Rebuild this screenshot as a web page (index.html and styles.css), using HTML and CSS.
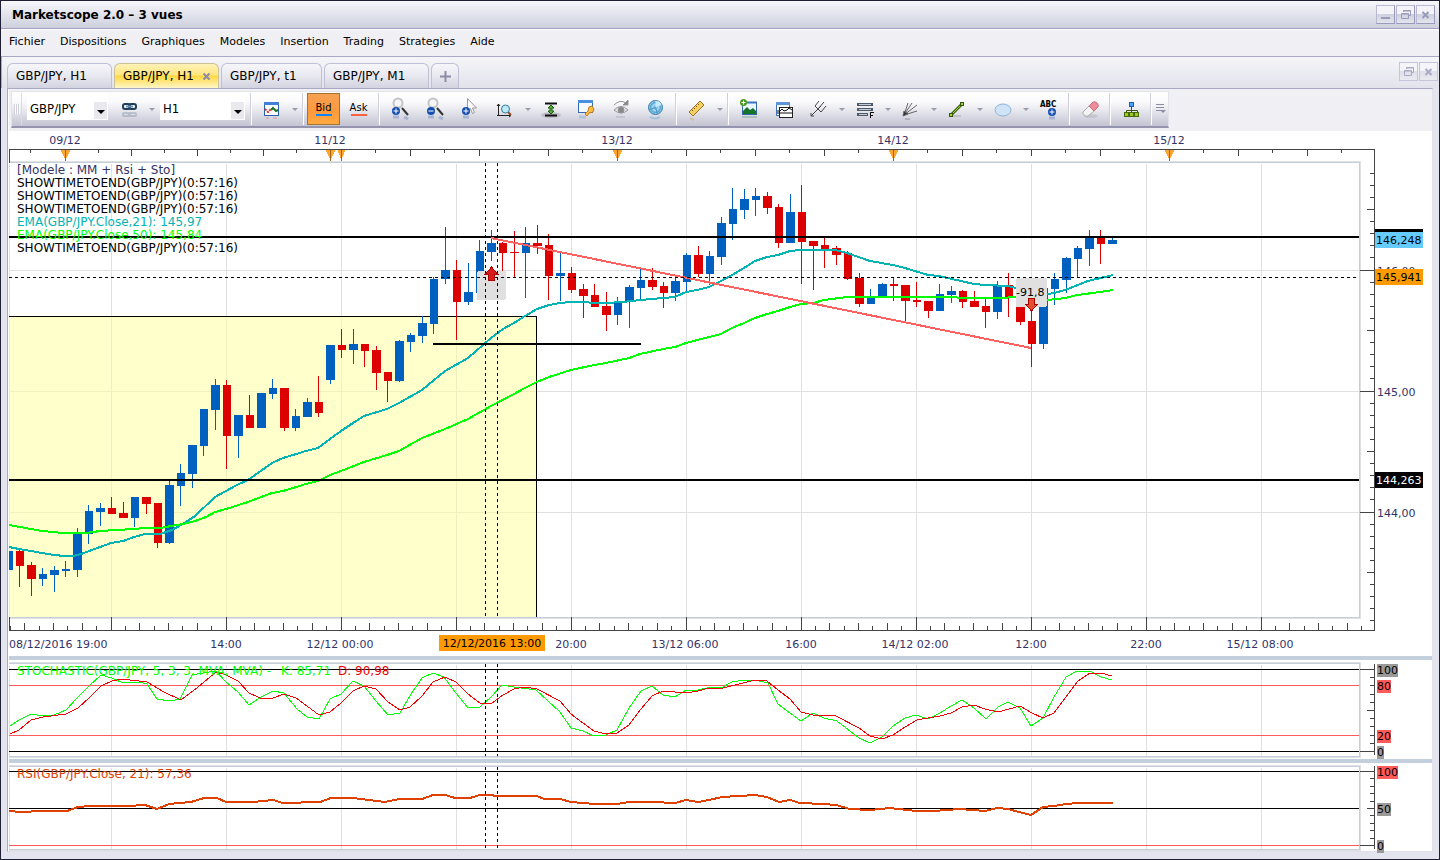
FILE: index.html
```html
<!DOCTYPE html>
<html lang="fr">
<head>
<meta charset="UTF-8">
<meta name="viewport" content="width=device-width, initial-scale=1.0">
<title>Marketscope 2.0</title>
<link rel="stylesheet" href="styles.css">
</head>
<body>

<div class="window">
    <header class="titlebar">
        <h1>Marketscope 2.0 – 3 vues</h1>
        <div class="window-buttons">
            <button type="button" aria-label="Minimize"><svg width="17" height="17"><path d="M4 12h9" stroke="#9a9abb" stroke-width="2"/></svg></button>
            <button type="button" aria-label="Restore"><svg width="17" height="17" fill="none" stroke="#9a9abb"><path d="M6.5 6V4.5h7v5H12M6 5h8M4.5 7.5h7v5h-7zM4 8h8"/></svg></button>
            <button type="button" aria-label="Close"><svg width="17" height="17"><path d="M5.5 6l6 6M11.5 6l-6 6" stroke="#9a9abb" stroke-width="2"/></svg></button>
        </div>
    </header>

    <nav class="menu">
        <a href="#">Fichier</a>
        <a href="#">Dispositions</a>
        <a href="#">Graphiques</a>
        <a href="#">Modeles</a>
        <a href="#">Insertion</a>
        <a href="#">Trading</a>
        <a href="#">Strategies</a>
        <a href="#">Aide</a>
    </nav>

    <div class="tabs">
        <button type="button" class="tab">GBP/JPY, H1</button>
        <button type="button" class="tab active">GBP/JPY, H1 <svg width="9" height="9"><path d="M1.5 1.5l6 6M7.5 1.5l-6 6" stroke="#8c8ca8" stroke-width="2"/></svg></button>
        <button type="button" class="tab tab-short">GBP/JPY, t1</button>
        <button type="button" class="tab">GBP/JPY, M1</button>
        <button type="button" class="tab tab-add" aria-label="New tab"><svg width="11" height="11"><path d="M5.5 0v11M0 5.5h11" stroke="#8c8ca8" stroke-width="2"/></svg></button>
        <div class="window-buttons inner">
            <button type="button" aria-label="Restore chart"><svg width="17" height="17" fill="none" stroke="#a9a9c6"><path d="M6.5 6V4.5h7v5H12M6 5h8M4.5 7.5h7v5h-7zM4 8h8"/></svg></button>
            <button type="button" aria-label="Close chart"><svg width="17" height="17"><path d="M5.5 6l6 6M11.5 6l-6 6" stroke="#a9a9c6" stroke-width="2"/></svg></button>
        </div>
    </div>

    <main class="view">
        <div class="toolbar-row">
        <div class="toolbar">
            <span class="grip"></span>
            <select class="combo" aria-label="Instrument"><option>GBP/JPY</option></select>
            <button type="button" class="tool" aria-label="Link"><svg width="24" height="24" fill="none" stroke="#1f3f5c" stroke-width="2"><rect x="6" y="7" width="7" height="5" rx="2"/><rect x="12" y="7" width="7" height="5" rx="2"/><path d="M9 9.5h7" stroke="#6f93b3"/><g opacity=".2"><rect x="6" y="16" width="7" height="3" rx="1"/><rect x="12" y="16" width="7" height="3" rx="1"/></g></svg></button>
            <button type="button" class="caret" aria-label="Link options"></button>
            <select class="combo combo-period" aria-label="Period"><option>H1</option></select>
            <span class="sep"></span>
            <button type="button" class="tool" aria-label="Chart type"><svg width="24" height="24" fill="none"><rect x="4.5" y="5.5" width="14" height="13" fill="#fff" stroke="#2b5fae"/><path d="M4 6.5h15" stroke="#3f7fd8" stroke-width="3"/><path d="M5 12l3 3 3-3" stroke="#e03020" stroke-width="2" stroke-dasharray="2 1"/><path d="M11 13l2-2 3 3 2-1" stroke="#20702a" stroke-width="2"/><path d="M6 21h3M13 21h4" stroke="#c99" opacity=".5" stroke-width="2"/></svg></button>
            <button type="button" class="caret" aria-label="Chart type options"></button>
            <span class="sep"></span>
            <button type="button" class="price bid">Bid</button>
            <button type="button" class="price ask">Ask</button>
            <span class="sep"></span>
            <button type="button" class="tool" aria-label="Zoom in"><svg width="24" height="24" fill="none"><path d="M14 11l6 7" stroke="#333" stroke-width="2"/><circle cx="10" cy="6" r="4.5" fill="#f6f6f6" stroke="#c4c4c4" stroke-width="2"/><circle cx="8" cy="14" r="4" fill="#1550b0"/><path d="M8 11.5v5M5.5 14h5" stroke="#fff"/><path d="M5 20h6M16 20l4 2" stroke="#6080b8" opacity=".4" stroke-width="3"/></svg></button>
            <button type="button" class="tool" aria-label="Zoom out"><svg width="24" height="24" fill="none"><path d="M14 11l6 7" stroke="#333" stroke-width="2"/><circle cx="10" cy="6" r="4.5" fill="#f6f6f6" stroke="#c4c4c4" stroke-width="2"/><circle cx="8" cy="14" r="4" fill="#1550b0"/><path d="M5.5 14h5" stroke="#fff"/><path d="M5 20h6M16 20l4 2" stroke="#6080b8" opacity=".4" stroke-width="3"/></svg></button>
            <button type="button" class="tool" aria-label="Pointer"><svg width="24" height="24" fill="none"><path d="M9.5 1.5v12l3-2 2 5 2-1-2-4.5h4z" fill="#fafafa" stroke="#999"/><circle cx="8" cy="14" r="4" fill="#1550b0"/><path d="M8 11.5v5M5.5 14h5" stroke="#fff"/><path d="M5 20h6" stroke="#6080b8" opacity=".4" stroke-width="3"/></svg></button>
            <button type="button" class="tool" aria-label="Scale zoom"><svg width="24" height="24" fill="none"><path d="M5.5 7v12M4 9l1.5-2L7 9M4 18.5h13M16 17l2 1.5-2 1.5" stroke="#222"/><path d="M15 15l3 3" stroke="#a05020" stroke-width="2"/><circle cx="12.5" cy="12" r="4" fill="#bdeaf8" stroke="#367a94"/></svg></button>
            <button type="button" class="caret" aria-label="Scale options"></button>
            <button type="button" class="tool" aria-label="Fit height"><svg width="24" height="24" fill="none"><ellipse cx="12" cy="18" rx="10" ry="3" fill="#777" opacity=".3"/><path d="M6 6.5h12M6 18.5h12" stroke="#111" stroke-width="2"/><path d="M12 8l3 3h-2v3h2l-3 3-3-3h2v-3H9z" fill="#58b030" stroke="#1f5c14"/></svg></button>
            <button type="button" class="tool" aria-label="Properties"><svg width="24" height="24" fill="none"><rect x="4.5" y="3.5" width="14" height="12" fill="#f4f8ff" stroke="#3868b0"/><path d="M4 4.5h15" stroke="#4a8ee0" stroke-width="3"/><path d="M11 17l3-3 1-4 3-1 2 3-1 3-4 1-2 3z" fill="#ffc04a" stroke="#c47a12"/><path d="M5 20h7" stroke="#7ba0dc" opacity=".4" stroke-width="3"/></svg></button>
            <button type="button" class="tool" aria-label="Refresh view"><svg width="24" height="24" fill="none" stroke="#94949a"><path d="M5 13q7-7 14 0q-7 6-14 0z" fill="#e8e8ec"/><circle cx="12" cy="13" r="3" fill="#888"/><path d="M5 8q6-6 12-2"/><path d="M19 3v5h-5z" fill="#888"/><path d="M7 20h9" opacity=".3" stroke-width="2"/></svg></button>
            <button type="button" class="tool" aria-label="Web"><svg width="24" height="24" fill="none"><circle cx="11.5" cy="10.5" r="7" fill="#7ec0e6" stroke="#3a80ac"/><circle cx="11.5" cy="10.5" r="5" stroke="#5aa4cc"/><circle cx="11.5" cy="10.5" r="3" stroke="#b8e2f6"/><path d="M11.5 10.5V4q5 0 6 4z" fill="#c7ecff"/><path d="M11.5 10.5l-6 2M11.5 10.5l2 6" stroke="#4a94c0"/><path d="M6 20q5 3 10 0" stroke="#70a8d0" opacity=".5" stroke-width="2"/></svg></button>
            <span class="sep"></span>
            <button type="button" class="tool" aria-label="Ruler"><svg width="24" height="24" fill="none"><path d="M4 15L15 4l4 4L8 19z" fill="#f6cf63" stroke="#9a7420"/><path d="M7 13l1 1M9 11l1 1M11 9l1 1M13 7l1 1" stroke="#7a5a10"/><path d="M5 21l4 2" stroke="#c5a55c" opacity=".4" stroke-width="2"/></svg></button>
            <button type="button" class="caret" aria-label="Ruler options"></button>
            <span class="sep"></span>
            <button type="button" class="tool" aria-label="Add picture"><svg width="24" height="24" fill="none"><rect x="5.5" y="5.5" width="14" height="12" fill="#e9f5ff" stroke="#3566a8"/><path d="M5 5.5h15" stroke="#3a72c4" stroke-width="2"/><path d="M6 17v-3l4-4 3 3 3-2 3 3v3z" fill="#14742a"/><circle cx="6.5" cy="5.5" r="3.5" fill="#4a9a20"/><path d="M6.5 3.5v4M4.5 5.5h4" stroke="#fff"/><path d="M5 20h15" stroke="#5a9080" opacity=".35" stroke-width="2"/></svg></button>
            <button type="button" class="tool" aria-label="Indicator"><svg width="24" height="24" fill="none"><rect x="4.5" y="5.5" width="13" height="13" fill="#f4f8ff" stroke="#4272b8"/><path d="M4 6.5h14" stroke="#5d94dc" stroke-width="3"/><rect x="7.5" y="10.5" width="13" height="10" fill="#fff" stroke="#222"/><path d="M5 14h3l2-2 2 2 3-1 2-2 3 2M5 16h15" stroke="#111"/></svg></button>
            <button type="button" class="tool" aria-label="Pitchfork"><svg width="24" height="24" stroke="#444" fill="none"><path d="M4 19l10-10M8 9l6 6M8 9l4-5M11 12l6-7M14 15l5-6M4 16v3h3"/></svg></button>
            <button type="button" class="caret" aria-label="Pitchfork options"></button>
            <button type="button" class="tool" aria-label="Fibonacci"><svg width="24" height="24" stroke="#4b5a66" fill="none"><path d="M4 7.5h16M4 12.5h16M4 17.5h11" stroke-width="3"/><path d="M6 7.5h12M6 12.5h12M6 17.5h8" stroke="#c2ccd6"/><path d="M17.5 21v-6M17 15.5h4M17 18.5h3" stroke="#111"/></svg></button>
            <button type="button" class="caret" aria-label="Fibonacci options"></button>
            <button type="button" class="tool" aria-label="Fan"><svg width="24" height="24" stroke="#666" fill="none"><path d="M5 18L9 6M5 18l8-12M5 18L18 8M5 18l13-4"/><path d="M4 19l1-5 4 3z" fill="#333"/><path d="M6 22h5" opacity=".3" stroke-width="2"/></svg></button>
            <button type="button" class="caret" aria-label="Fan options"></button>
            <button type="button" class="tool" aria-label="Line"><svg width="24" height="24" fill="none"><path d="M7 19h9" stroke="#888" opacity=".3" stroke-width="2"/><path d="M6 18L17 7" stroke="#3f6810" stroke-width="3"/><path d="M6 18L17 7" stroke="#9ad02c"/><rect x="4.5" y="16.5" width="3" height="3" fill="#a5d43c" stroke="#33560b"/><rect x="15.5" y="5.5" width="3" height="3" fill="#a5d43c" stroke="#33560b"/></svg></button>
            <button type="button" class="caret" aria-label="Line options"></button>
            <button type="button" class="tool" aria-label="Ellipse"><svg width="24" height="24"><ellipse cx="12" cy="13" rx="8" ry="6" fill="#cfe3f6" stroke="#8fb4da"/></svg></button>
            <button type="button" class="caret" aria-label="Ellipse options"></button>
            <button type="button" class="tool" aria-label="Add label"><svg width="24" height="24" fill="none"><text x="3" y="10" class="abc">ABC</text><circle cx="15" cy="15" r="4" fill="#1550b0"/><path d="M15 12.5v5M12.5 15h5" stroke="#fff"/><path d="M12 21h6" stroke="#6080b8" opacity=".4" stroke-width="3"/></svg></button>
            <span class="sep"></span>
            <button type="button" class="tool" aria-label="Eraser"><svg width="24" height="24"><ellipse cx="13" cy="19" rx="7" ry="2" fill="#888" opacity=".25"/><path d="M5 15l6-6 5 5-6 5q-2 1-4-1t-1-3z" fill="#f4f4f4" stroke="#aaa"/><path d="M11 9l4-4q2-1 4 1t1 4l-4 4z" fill="#ee8c9c" stroke="#cc7080"/></svg></button>
            <span class="sep"></span>
            <button type="button" class="tool" aria-label="Hierarchy"><svg width="24" height="24" fill="none"><path d="M12.5 10v4M7.5 16v-2.5h11V16M12.5 14v2" stroke="#3b5a10"/><rect x="10.5" y="5.5" width="4" height="4" fill="#4ba4ff" stroke="#1560b4"/><g fill="#9acb1e" stroke="#48680c"><rect x="5.5" y="15.5" width="4" height="4"/><rect x="10.5" y="15.5" width="4" height="4"/><rect x="15.5" y="15.5" width="4" height="4"/></g></svg></button>
            <span class="sep"></span>
            <button type="button" class="more" aria-label="More tools"><svg width="10" height="12" fill="none"><path d="M0 1.5h8M0 4.5h8M0 7.5h5" stroke="#8c8ca4"/><path d="M4 7h6l-3 3z" fill="#8c8ca4"/></svg></button>
        </div>
        </div>

        <svg class="chart" viewBox="9 131 1423 525">
            <g id="priceGrid" class="grid"></g>
            <g class="crisp">
                <rect x="9" y="316" width="527" height="301" fill="#ffff99" opacity=".5"/>
                <path d="M9 316.5H536.5V617" class="black"/>
            </g>
            <g id="candles" class="crisp"></g>
            <polyline class="ema21" points="9,547 19,549 31,551 42,553 54,555 65,556 73,556 81,554 100,547 111,543 123,541 134,537 145,534 160,534 172,530 183,524 195,516 215,497 226,491 237,485 248,480 272,463 283,458 306,451 318,448 330,439 341,431 353,423 364,416 387,409 399,403 422,390 445,371 468,358 491,338 503,329 514,323 525,316 537,309 549,305 560,303 571,302 606,303 623,302 640,300 663,298 675,297 686,292 697,290 709,287 721,281 732,275 744,268 755,261 767,257 778,255 790,251 801,250 835,250 847,253 870,261 893,265 905,268 928,275 939,276 974,284 985,285 1008,286 1016,288 1031,293 1048,294 1054,293 1065,290 1088,281 1113,275"/>
            <polyline class="ema50" points="9,525 31,529 42,531 54,532 62,533 86,533 100,531 134,529 145,528 160,528 183,524 195,521 206,517 215,512 226,509 248,502 272,493 283,491 306,484 318,481 330,475 341,471 364,462 387,455 399,451 422,438 445,429 468,419 491,406 514,394 525,388 537,382 549,377 571,370 594,365 606,363 629,358 640,354 663,349 675,347 686,343 709,337 721,334 732,328 744,323 755,318 767,314 778,311 790,307 801,304 813,303 824,300 847,297 939,297 974,298 1000,298 1016,297 1030,299 1048,300 1065,298 1077,295 1100,292 1113,290"/>
            <g class="crisp">
                <path d="M9 237H1359M9 480H1359M433 344H641" class="black thick"/>
                <path d="M491 238L1031 348" stroke="#ff6060" stroke-width="2"/>
                <rect x="477" y="271" width="29" height="29" rx="2" fill="#e0e0e0"/>
                <rect x="1016" y="278" width="31" height="29" rx="2" fill="#e0e0e0"/>
                <path d="M9 277.5H1360M485.5 163V617M497.5 163V617" class="dashed"/>
            </g>
            <path d="M491.5 267l6 7h-3v6.5h-6V274h-3z" fill="#d81c1c" stroke="#a00"/>
            <path d="M1031.5 311l6-7h-3v-6h-6v6h-3z" fill="#e05030" stroke="#a00"/>
            <text x="1016" y="296" class="dark">-91,8</text>
            <path class="frame-outer" d="M9 161.5H1360.5V618.5H9"/>
            <path class="frame" d="M9 162.5H1359.5V617.5H9"/>
            <g id="dayAxis"></g>
            <g id="timeAxis"></g>
            <g id="priceAxis"></g>
            <path class="axis" d="M9.5 163V149.5H1374.5V630.5H9.5V617"/>
            <g class="legend">
                <text x="17" y="174">[Modele : MM + Rsi + Sto]</text>
                <text x="17" y="187" class="dark">SHOWTIMETOEND(GBP/JPY)(0:57:16)</text>
                <text x="17" y="200" class="dark">SHOWTIMETOEND(GBP/JPY)(0:57:16)</text>
                <text x="17" y="213" class="dark">SHOWTIMETOEND(GBP/JPY)(0:57:16)</text>
                <text x="17" y="226" fill="#00b4b4">EMA(GBP/JPY.Close,21): 145,97</text>
                <text x="17" y="239" fill="#00ff00">EMA(GBP/JPY.Close,50): 145,84</text>
                <text x="17" y="252" class="dark">SHOWTIMETOEND(GBP/JPY)(0:57:16)</text>
            </g>
            <text x="1377" y="275">146,00</text>
            <text x="1377" y="396">145,00</text>
            <text x="1377" y="517">144,00</text>
            <g class="crisp">
                <rect x="1375" y="229" width="48" height="4" fill="#000"/>
                <rect x="1375" y="232" width="48" height="16" fill="#66ccff"/>
                <rect x="1375" y="269" width="48" height="16" fill="#ff9900"/>
                <rect x="1375" y="472" width="48" height="16" fill="#000"/>
                <rect x="439" y="635" width="106" height="16" fill="#ff9900"/>
            </g>
            <text x="1376" y="244" class="dark">146,248</text>
            <text x="1376" y="281" class="dark">145,941</text>
            <text x="1376" y="484" fill="#fff">144,263</text>
            <text x="492" y="647" class="dark" text-anchor="middle">12/12/2016 13:00</text>
        </svg>

        <div class="divider"></div>

        <svg class="chart" viewBox="9 660 1423 99">
            <g id="stochGrid" class="grid"></g>
            <path d="M9 669.5H1359M9 751.5H1359" class="black"/>
            <path d="M9 685.5H1359M9 735.5H1359" class="level"/>
            <polyline class="stoch-k" points="10,726 19,720 31,714 43,716 54,715 66,710 77,698 89,686 101,675 112,678 123,683 139,682 147,684 157,699 170,701 180,699 192,675 203,673 216,671 226,682 238,692 249,705 261,697 273,691 284,693 297,709 307,717 319,719 330,699 341,694 353,681 364,686 376,701 388,715 400,713 411,694 422,678 433,673 444,677 456,693 468,708 480,707 491,697 502,685 514,687 536,690 560,712 571,728 583,731 594,736 606,735 617,730 629,708 641,691 652,686 663,695 675,697 686,690 698,690 711,687 721,688 732,682 744,680 755,680 768,683 778,704 790,713 801,721 813,713 824,718 837,721 859,738 870,743 882,737 893,726 905,718 916,715 928,719 940,713 951,706 962,700 974,708 986,719 998,707 1008,702 1020,708 1031,726 1043,718 1054,697 1066,677 1077,671 1090,671 1101,677 1112,680"/>
            <polyline class="stoch-d" points="10,734 19,730 31,720 43,717 66,714 78,708 89,698 101,686 112,681 122,679 147,682 164,692 181,700 198,687 216,672 226,675 238,681 249,693 260,698 273,698 284,694 296,698 307,706 319,715 330,712 341,703 353,691 364,686 376,689 388,702 400,710 410,707 422,696 433,682 445,677 456,682 468,694 480,703 492,703 503,695 514,689 525,687 537,689 560,701 571,714 583,723 594,731 606,734 617,733 629,725 641,709 652,696 663,691 686,693 698,691 709,688 723,688 755,680 767,681 778,690 790,699 801,712 813,715 836,716 859,728 870,736 882,739 893,735 905,727 917,720 928,718 940,716 951,713 962,707 974,705 985,709 998,712 1009,709 1020,706 1032,713 1043,718 1054,713 1066,697 1078,681 1090,673 1101,673 1112,676"/>
            <path d="M485.5 664V756M497.5 664V756" class="dashed"/>
            <path class="frame-outer" d="M9 662.5H1360.5V757.5H9"/>
            <path class="frame" d="M9 663.5H1359.5V756.5H9"/>
            <g id="stochAxis"></g>
            <g class="legend">
                <text x="17" y="675" fill="#00ff00">STOCHASTIC(GBP/JPY, 5, 3, 3, MVA, MVA) -</text>
                <text x="281" y="675" fill="#00ff00">K: 85,71</text>
                <text x="338" y="675" fill="#f00000">D: 90,98</text>
            </g>
        </svg>

        <div class="divider"></div>

        <svg class="chart" viewBox="9 763 1423 88">
            <g id="rsiGrid" class="grid"></g>
            <path d="M9 771.5H1359M9 808.5H1359" class="black"/>
            <path d="M9 845.5H1359" class="level"/>
            <polyline class="rsi" points="9,811 20,812 43,811 67,811 78,807 90,806 128,806 145,805 157,809 169,804 191,802 204,798 217,798 226,802 253,802 273,800 283,803 320,802 331,798 353,798 385,802 399,799 422,799 433,795 445,795 455,798 470,798 480,795 490,795 497,796 537,796 544,799 560,799 571,802 583,803 594,804 617,804 629,802 652,802 675,803 686,800 698,802 709,800 722,797 755,795 767,797 779,802 790,800 800,803 824,804 836,805 850,809 870,810 890,808 916,811 934,811 960,809 985,811 997,808 1008,809 1019,812 1031,815 1043,807 1054,806 1066,804 1078,803 1113,803"/>
            <path d="M485.5 767V849M497.5 767V849" class="dashed"/>
            <path class="frame-outer" d="M9 765.5H1360.5V850.5H9"/>
            <path class="frame" d="M9 766.5H1359.5V849.5H9"/>
            <g id="rsiAxis"></g>
            <g class="legend">
                <text x="17" y="778" fill="#e04000">RSI(GBP/JPY.Close, 21): 57,36</text>
            </g>
        </svg>
    </main>
</div>

<script src="script.js"></script>
</body>
</html>
```
FILE: styles.css
```css
* {
    box-sizing: border-box;
}

body {
    margin: 0;
    font-family: "DejaVu Sans", Verdana, sans-serif;
    font-size: 11px;
    color: #000;
    background: #e4e4ee;
}

button {
    font: inherit;
    color: inherit;
    padding: 0;
    margin: 0;
    border: 0;
    background: none;
}

svg {
    display: block;
}

.window {
    border: 1px solid #1f1f33;
    padding-bottom: 7px;
    background: #e4e4ee;
}

/* title bar */
.titlebar {
    display: flex;
    align-items: center;
    justify-content: space-between;
    height: 28px;
    padding: 0 4px 0 11px;
    background: linear-gradient(#f7f7fb, #e2e3ec 50%, #cdcfdc);
    border-bottom: 1px solid #9fa0c0;
}

.titlebar h1 {
    margin: 0;
    font-size: 12px;
    font-weight: bold;
}

.window-buttons {
    display: flex;
    gap: 1px;
}

.window-buttons button {
    width: 19px;
    height: 19px;
    border: 1px solid #b9bad2;
    border-bottom-color: #9a9abb;
    border-right-color: #9a9abb;
    background: linear-gradient(#f3f3f8 50%, #d0d1de 50%, #e4e4ee);
}

.window-buttons.inner {
    margin-left: auto;
    align-self: flex-start;
}

.window-buttons.inner button {
    border-color: #c4c5da;
    background: linear-gradient(#f5f5f9 50%, #dedee9 50%, #eaeaf1);
}

/* menu */
.menu {
    display: flex;
    align-items: center;
    gap: 15px;
    height: 28px;
    padding: 0 8px 3px;
    background: #f0eff4;
    border-top: 1px solid #fff;
    border-bottom: 1px solid #a9a9c4;
}

.menu a {
    color: #000;
    text-decoration: none;
}

/* tabs */
.tabs {
    display: flex;
    align-items: flex-end;
    gap: 2px;
    height: 31px;
    padding: 5px 1px 0 5px;
    background: linear-gradient(#f5f5f9, #e2e2ec);
    border-left: 1px solid #a9a9c4;
}

.tab {
    display: flex;
    align-items: center;
    justify-content: space-between;
    width: 105px;
    height: 25px;
    padding: 0 7px 0 8px;
    font-size: 12px;
    white-space: nowrap;
    border: 1px solid #bfbfd6;
    border-bottom: 0;
    border-radius: 6px 6px 0 0;
    background: linear-gradient(#f6f6fa, #e8e8f0 50%, #d3d3e0);
}

.tab.active {
    border-color: #c9c19c;
    background: linear-gradient(#fff2b8, #ffe680 45%, #ffd840 50%, #fff6c8);
}

.tab-short {
    width: 101px;
}

.tab-add {
    width: 28px;
    justify-content: center;
}

/* chart view */
.view {
    margin: 0 6px;
    border: 1px solid #a9a9c4;
    border-right-color: #e0e0e8;
    border-bottom-color: #e0e0e8;
    padding-left: 1px;
    background: #fff;
}

.toolbar-row {
    height: 42px;
    padding: 2px 2px;
    background: #f0eff4;
}

.toolbar {
    display: inline-flex;
    align-items: center;
    height: 37px;
    background: linear-gradient(#fff, #fafafc 30%, #d3d3df 80%, #c4c4d2);
    border: 1px solid #e2e2ea;
    border-bottom: 2px solid #9494ae;
}

.grip {
    width: 10px;
    height: 32px;
    margin-right: 5px;
    border-right: 1px solid #dcdce6;
    background: repeating-linear-gradient(90deg, #d0d0dc 0 1px, #fff 1px 2px) 2px 11px / 6px 10px no-repeat;
}

.combo {
    appearance: none;
    align-self: flex-start;
    width: 81px;
    height: 28px;
    margin-right: 3px;
    padding: 4px 14px 0 3px;
    border: 0;
    border-radius: 0;
    color: #000;
    font-family: "DejaVu Sans Condensed", "DejaVu Sans", sans-serif;
    font-size: 13px;
    background: url("data:image/svg+xml,%3Csvg xmlns='http://www.w3.org/2000/svg' width='13' height='17'%3E%3Crect width='13' height='17' fill='%23e8e8ee'/%3E%3Cpath d='M3 8h8l-4 4z'/%3E%3C/svg%3E") right 1px bottom 1px no-repeat #fff;
}

.combo-period {
    width: 85px;
    margin-left: 3px;
}

.sep {
    width: 2px;
    height: 32px;
    margin: 0 2px;
    border-left: 1px solid #cfcfdb;
    border-right: 1px solid #fff;
}

.tool {
    display: flex;
    align-items: center;
    justify-content: center;
    width: 35px;
    height: 32px;
}

.caret {
    width: 11px;
    height: 32px;
}

.caret::before {
    content: "";
    display: block;
    margin: 0 auto;
    width: 0;
    border: 3px solid transparent;
    border-top-color: #9a9ab0;
    border-bottom: 0;
}

.price {
    width: 33px;
    height: 32px;
    margin: 0 1px;
    font-size: 10px;
}

.price::after {
    content: "";
    display: block;
    width: 16px;
    height: 2px;
    margin: 1px auto 0;
    background: #ff6040;
}

.price.bid {
    border: 1px solid #a07430;
    background: linear-gradient(#f5a055, #ff9a3c 60%, #ffa940);
}

.price.bid::after {
    background: #0a84ff;
}

.abc {
    fill: #000;
    font-family: "DejaVu Sans Condensed", sans-serif;
    font-size: 8px;
    font-weight: bold;
}

.more {
    width: 14px;
    display: flex;
    justify-content: center;
}

/* charts */
.chart {
    width: 100%;
    height: auto;
    fill: none;
    overflow: visible;
}

.chart text {
    font-size: 11px;
}

.chart .legend text {
    font-size: 12px;
}

.chart text:not([fill]) {
    fill: #333366;
}

.chart text.dark:not([fill]) {
    fill: #000;
}

.chart path,
.chart polyline,
.crisp {
    shape-rendering: crispEdges;
}

.divider {
    height: 4px;
    background: #c3cfdd;
}

.grid { stroke: #e0e0e0; }
.black { stroke: #000; }
.thick { stroke-width: 2; }
.level { stroke: #ff5a5a; }
.dashed { stroke: #000; stroke-dasharray: 3 3; }
.axis { stroke: #444; }
.frame { stroke: #c3cfdd; }
.frame-outer { stroke: #e0e0e0; }
.ema21 { stroke: #00b4b4; stroke-width: 2; }
.ema50 { stroke: #00ff00; stroke-width: 2; }
.stoch-k { stroke: #00ff00; }
.stoch-d { stroke: #f00000; }
.rsi { stroke: #e04000; stroke-width: 2; }
```
FILE: script.js
```js
const NS = "http://www.w3.org/2000/svg";
const STEP = 11.5;
const ORIGIN = 111;

// direction, high, body top, body bottom, low
const candles = [
    "u 551 551 570 570", "d 550 551 566 587", "d 562 565 579 596", "u 568 574 579 586", "u 566 570 575 592",
    "u 561 569 571 577", "u 528 534 570 577", "u 505 511 534 544", "u 503 508 512 526", "d 497 508 514 514",
    "d 502 513 518 518", "u 497 497 518 527", "d 497 497 504 514", "d 503 503 543 548", "u 481 485 543 544",
    "u 464 473 486 506", "u 445 445 474 488", "u 409 409 446 456", "u 379 385 410 430", "d 380 385 436 469",
    "u 415 415 436 458", "d 395 415 428 428", "u 393 393 428 428", "u 379 388 394 399", "d 388 388 428 431",
    "u 409 416 428 431", "u 398 402 417 417", "d 376 402 413 417", "u 345 345 380 384", "d 329 345 350 358",
    "u 329 344 350 364", "d 344 344 351 367", "d 346 350 373 390", "d 372 372 381 402", "u 340 341 381 382",
    "u 333 335 342 352", "u 316 323 336 343", "u 277 279 324 334", "u 227 270 279 284", "d 260 270 302 340",
    "u 263 292 302 305", "u 240 251 293 293", "u 230 243 252 261", "d 242 243 253 271", "d 231 252 253 278",
    "u 227 243 253 298", "d 225 243 246 254", "d 234 245 276 300", "u 251 273 276 301", "d 267 273 290 293",
    "d 284 289 296 318", "d 284 295 307 307", "d 292 306 315 331", "u 297 301 315 325", "u 285 287 301 328",
    "u 269 280 288 299", "d 268 280 287 290", "d 282 286 293 308", "u 276 281 293 301", "u 253 255 282 291",
    "d 246 255 274 277", "u 251 256 274 285", "u 217 223 257 265", "u 188 209 224 240", "u 189 199 210 219",
    "u 188 196 200 216", "d 192 196 208 214", "d 204 207 243 248", "u 194 212 243 243", "d 185 212 242 284",
    "d 241 241 246 290", "d 238 245 250 268", "d 246 248 255 265", "d 251 253 279 280", "d 273 278 304 307",
    "u 289 297 304 304", "u 283 284 297 297", "d 278 284 286 301", "d 285 285 301 322", "d 282 300 302 307",
    "d 301 301 311 318", "u 284 294 311 311", "u 286 291 295 303", "d 290 291 302 308", "d 291 301 307 307",
    "d 299 306 312 328", "u 281 285 312 319", "d 273 285 297 317", "d 285 285 322 325", "d 310 321 344 367",
    "u 288 288 344 349", "u 273 279 289 305", "u 257 258 280 293", "u 246 248 259 277", "u 230 237 249 266",
    "d 230 237 244 264", "u 238 240 244 244"
];

function add(parent, tag, attrs, text) {
    const el = document.createElementNS(NS, tag);
    for (const key in attrs) {
        el.setAttribute(key, attrs[key]);
    }
    if (text) {
        el.textContent = text;
    }
    document.getElementById(parent).appendChild(el);
    return el;
}

function drawGrid(id, top, bottom) {
    let d = "M9.5 " + top + "V" + bottom;
    for (let x = ORIGIN; x < 1359; x += STEP * 10) {
        d += "M" + (x + 0.5) + " " + top + "V" + bottom;
    }
    add(id, "path", { d: d });
}

function drawCandles() {
    candles.forEach((row, i) => {
        const [dir, high, top, bottom, low] = row.split(" ");
        const color = dir === "u" ? "#0060c0" : "#dd0000";
        const exact = ORIGIN + (i - 9) * STEP;
        const x = Math.ceil(exact);
        const left = Math.max(9, x === exact ? x - 3 : x - 4);
        const right = x + 5;
        if (x > 9) {
            add("candles", "rect", { x: x, y: high, width: 1, height: low - high, fill: color });
        }
        add("candles", "rect", { x: left, y: top, width: right - left, height: bottom - top, fill: color });
    });
}

function drawDayAxis() {
    let d = "M30.5 150v3";
    [98, 131, 164, 197, 230, 263, 296].forEach((x, i) => {
        d += "M" + (x + 0.5) + " 150v" + (i % 2 ? 6 : 3);
    });
    for (let i = 1; i < 30; i++) {
        const x = Math.floor(341 + i * 34.5) + 0.5;
        d += "M" + x + " 150v" + (i % 2 ? 3 : 6);
    }
    add("dayAxis", "path", { d: d, class: "axis" });
    [65, 330, 341, 617, 893, 1169].forEach(x => {
        const w = x === 341 ? 4 : 5;
        add("dayAxis", "path", { d: `M${x + 0.5 - w} 150h${w * 2}L${x + 0.5} 160z`, fill: "#ffa630" });
        add("dayAxis", "path", { d: `M${x + 0.5} 150v11`, stroke: "#a86410" });
    });
    [["09/12", 65], ["11/12", 330], ["13/12", 617], ["14/12", 893], ["15/12", 1169]].forEach(([label, x]) => {
        add("dayAxis", "text", { x: x, y: 144, "text-anchor": "middle" }, label);
    });
}

function drawTimeAxis() {
    let d = "";
    for (let i = -7; i < 88; i++) {
        const x = Math.floor(ORIGIN + i * 14.375) + 0.5;
        if (x > 1365) break;
        const h = i % 8 === 0 ? 13 : i % 2 === 0 ? 7 : 4;
        d += "M" + x + " 630v-" + h;
    }
    add("timeAxis", "path", { d: d, class: "axis" });
    add("timeAxis", "text", { x: 9, y: 648 }, "08/12/2016 19:00");
    [["14:00", 226], ["12/12 00:00", 340], ["20:00", 571], ["13/12 06:00", 685], ["16:00", 801],
        ["14/12 02:00", 915], ["12:00", 1031], ["22:00", 1146], ["15/12 08:00", 1260]].forEach(([label, x]) => {
        add("timeAxis", "text", { x: x, y: 648, "text-anchor": "middle" }, label);
    });
}

function drawPriceAxis() {
    let d = "";
    for (let i = -18; i <= 19; i++) {
        const y = Math.floor(391 + i * 12.1) + 0.5;
        const w = i % 10 === 0 ? 14 : i % 5 === 0 ? 7 : 4;
        d += "M1374 " + y + "h-" + w;
    }
    add("priceAxis", "path", { d: d, class: "axis" });
    add("priceGrid", "path", { d: "M9 270.5H1359M9 391.5H1359M9 512.5H1359" });
}

function drawLevelAxis(id, top, bottom, tags) {
    let d = "M1374.5 " + (top - 5) + "V" + (bottom + 4);
    for (let v = 0; v <= 10; v++) {
        const y = Math.round(bottom - v * (bottom - top) / 10) + 0.5;
        const w = v % 10 === 0 ? 14 : v === 5 ? 7 : 4;
        d += "M1374 " + y + "h-" + w;
    }
    add(id, "path", { d: d, class: "axis" });
    tags.forEach(([label, y, color]) => {
        add(id, "rect", { x: 1377, y: y - 6, width: label.length * 7, height: 13, fill: color });
        add(id, "text", { x: 1377, y: y + 4, class: "dark" }, label);
    });
}

drawGrid("priceGrid", 164, 617);
drawGrid("stochGrid", 665, 756);
drawGrid("rsiGrid", 768, 849);
drawCandles();
drawDayAxis();
drawTimeAxis();
drawPriceAxis();
drawLevelAxis("stochAxis", 669, 751, [["100", 670, "#999"], ["80", 686, "#ff5a5a"], ["20", 736, "#ff5a5a"], ["0", 752, "#999"]]);
drawLevelAxis("rsiAxis", 771, 845, [["100", 772, "#ff5a5a"], ["50", 809, "#999"], ["0", 846, "#999"]]);
```
